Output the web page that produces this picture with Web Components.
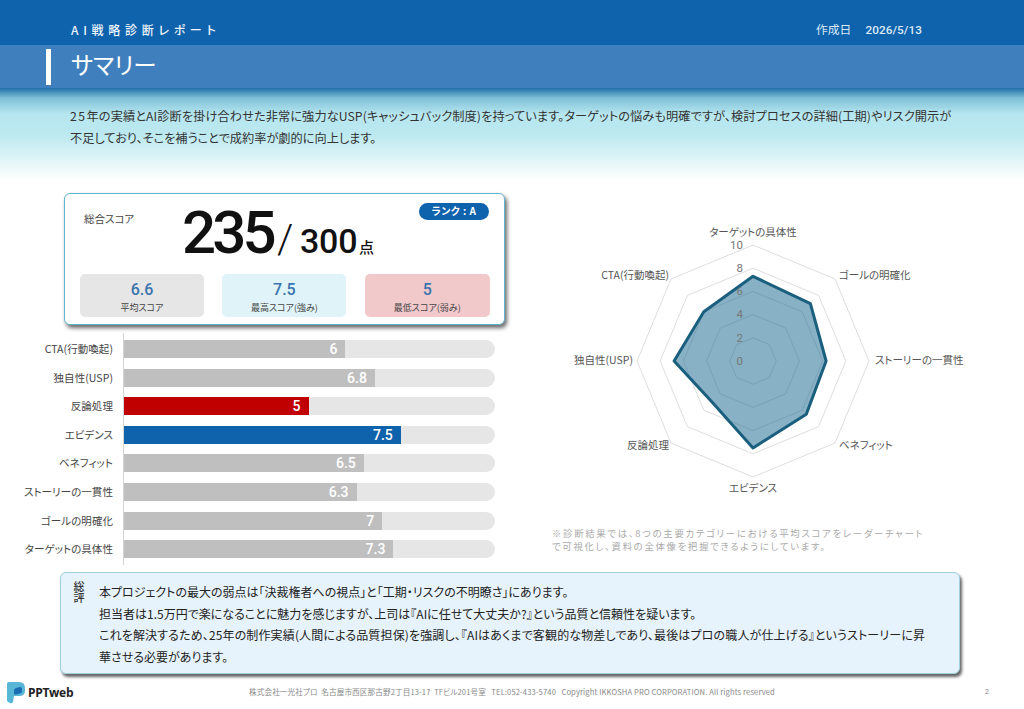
<!DOCTYPE html>
<html lang="ja"><head><meta charset="utf-8"><title>サマリー</title>
<style>
html,body{margin:0;padding:0;background:#fff}
body{width:1024px;height:709px;overflow:hidden;font-family:"Noto Sans CJK JP","Noto Sans",sans-serif;color:#333;font-feature-settings:"palt"}
</style></head><body>
<report-page>
  <report-header slot="head" kicker="AI戦略診断レポート" date-label="作成日" date="2026/5/13" title="サマリー"></report-header>
  <summary-band slot="head"><span style="letter-spacing:.1px"><span style="letter-spacing:1.5px">25</span>年の実績とAI診断を掛け合わせた非常に強力なUSP(キャッシュバック制度)を持っています。ターゲットの悩みも明確ですが、検討プロセスの詳細(工期)やリスク開示が</span><br>不足しており、そこを補うことで成約率が劇的に向上します。</summary-band>
  <score-card slot="left">
    <stat-tile value="6.6" label="平均スコア" tone="grey"></stat-tile>
    <stat-tile value="7.5" label="最高スコア(強み)" tone="blue"></stat-tile>
    <stat-tile value="5" label="最低スコア(弱み)" tone="red"></stat-tile>
  </score-card>
  <bar-chart slot="left">
    <bar-row label="CTA(行動喚起)" value="6"></bar-row>
    <bar-row label="独自性(USP)" value="6.8"></bar-row>
    <bar-row label="反論処理" value="5" tone="low"></bar-row>
    <bar-row label="エビデンス" value="7.5" tone="high"></bar-row>
    <bar-row label="ベネフィット" value="6.5"></bar-row>
    <bar-row label="ストーリーの一貫性" value="6.3"></bar-row>
    <bar-row label="ゴールの明確化" value="7"></bar-row>
    <bar-row label="ターゲットの具体性" value="7.3"></bar-row>
  </bar-chart>
  <radar-chart slot="right">※診断結果では、8つの主要カテゴリーにおける平均スコアをレーダーチャート<br>で可視化し、資料の全体像を把握できるようにしています。</radar-chart>
  <verdict-box slot="verdict" label="総評">本プロジェクトの最大の弱点は「決裁権者への視点」と「工期・リスクの不明瞭さ」にあります。<br>担当者は1.5万円で楽になることに魅力を感じますが、上司は『AIに任せて大丈夫か?』という品質と信頼性を疑います。<br><span style="letter-spacing:.14px">これを解決するため、25年の制作実績(人間による品質担保)を強調し、『AIはあくまで客観的な物差しであり、最後はプロの職人が仕上げる』というストーリーに昇</span><br>華させる必要があります。</verdict-box>
  <page-footer slot="foot" page="2">株式会社一光社プロ&nbsp; 名古屋市西区那古野2丁目13-17&nbsp; TFビル201号室&nbsp;&nbsp; TEL:052-433-5740&nbsp;&nbsp; Copyright IKKOSHA PRO CORPORATION. All rights reserved</page-footer>
</report-page>
<script>
const FONT='"Noto Sans CJK JP","Noto Sans",sans-serif';
const NUM='Roboto,"Noto Sans CJK JP",sans-serif';
function def(name,html){
  customElements.define(name,class extends HTMLElement{
    connectedCallback(){
      if(this.shadowRoot)return;
      const r=this.attachShadow({mode:'open'});
      const get=k=>this.getAttribute(k)||'';
      r.innerHTML=typeof html==='function'?html(get,this):html;
    }
  });
}
def('report-page',`<style>
:host{display:block;width:1024px;height:709px;overflow:hidden}
.main{display:grid;grid-template-columns:540px 1fr;height:379px;padding-top:13px;box-sizing:content-box}
.left{display:flex;flex-direction:column;gap:8px}
</style>
<slot name="head"></slot>
<div class="main"><div class="left"><slot name="left"></slot></div><div><slot name="right"></slot></div></div>
<slot name="verdict"></slot><slot name="foot"></slot>`);

def('report-header',g=>`<style>
:host{display:block;color:#fff}
.top{height:45px;background:#0f62ac;display:flex;justify-content:space-between;align-items:center;padding:15px 102px 0 71px;box-sizing:border-box}
.kicker{font-size:12px;font-weight:500;letter-spacing:4.7px;color:#eef5fb;line-height:1}
.date{display:flex;gap:14px;font-size:11.8px;color:#dbe9f6;line-height:1}
.date b{font:500 11.8px ${NUM};letter-spacing:.05px}
.band{height:43px;background:#3f7fbd;display:flex;align-items:center;padding-left:46px;box-sizing:border-box}
.bar{width:5px;height:36px;background:#fff;margin-right:20px}
h1{margin:0;font-size:23.5px;font-weight:400;line-height:1;position:relative;top:-2px}
</style>
<div class="top"><span class="kicker">${g('kicker')}</span><span class="date"><span>${g('date-label')}</span><b>${g('date')}</b></span></div>
<div class="band"><i class="bar"></i><h1>${g('title')}</h1></div>`);

def('summary-band',`<style>
:host{display:block;height:92px;box-sizing:border-box;padding:17px 0 0 70px;font-size:12.2px;line-height:22px;color:#333;white-space:nowrap;
background:linear-gradient(#1f6fa8 0,#7fc0d8 10px,#b6e6ef 26px,#bde9f0 48px,#fff 92px)}
</style><slot></slot>`);

def('score-card',`<style>
:host{display:block;width:441px;height:132px;margin-left:64px;box-sizing:border-box;background:#fff;border:1px solid #5fb4cf;border-radius:6px;box-shadow:2px 3px 4px #666;padding:0 15px}
.top{height:80px;position:relative;display:flex;align-items:flex-start}
.lab{font-size:10.5px;color:#444;margin:17px 0 0 4px;line-height:16px;width:98px}
.score{display:flex;align-items:baseline;color:#111;font-family:${NUM};line-height:1;margin-top:9px}
.big{font-size:60px;font-weight:500;letter-spacing:-3.9px;width:95px}
.sl{font-size:41px;font-weight:300;width:23px}
.of{font-size:34px;font-weight:500;letter-spacing:-.2px;width:59px}
.pt{font-size:15px;font-family:${FONT};font-weight:500}
.rank{position:absolute;right:0;top:9px;width:70px;height:17px;border-radius:9px;background:#0f62ac;color:#fff;font-size:10px;font-weight:700;text-align:center;line-height:16px;letter-spacing:.5px}
.tiles{display:grid;grid-template-columns:124px 124px 125px;column-gap:18.4px}
</style>
<div class="top"><span class="lab">総合スコア</span>
<div class="score"><span class="big">235</span><span class="sl">/</span><span class="of">300</span><span class="pt">点</span></div>
<span class="rank">ランク : A</span></div>
<div class="tiles"><slot></slot></div>`);

def('stat-tile',g=>{const c={grey:'#e6e6e6',blue:'#dff3f9',red:'#f2c9cb'}[g('tone')];return `<style>
:host{display:flex;flex-direction:column;align-items:center;height:43px;border-radius:5px;background:${c}}
b{font:500 16px/18px ${NUM};color:#3a74ae;margin-top:7px}
span{font-size:9px;line-height:13px;color:#444;margin-top:2px}
</style><b>${g('value')}</b><span>${g('label')}</span>`});

def('bar-chart',`<style>
:host{display:block;position:relative;height:232px;box-sizing:border-box;padding-top:7px}
.wrap{display:flex;flex-direction:column;gap:10.6px}
.axis{position:absolute;left:123px;top:0;bottom:0;width:1px;background:#d4d4d4}
</style><i class="axis"></i><div class="wrap"><slot></slot></div>`);

def('bar-row',g=>{const v=parseFloat(g('value'));const c={low:'#c00000',high:'#0f62ac'}[g('tone')]||'#bfbfbf';return `<style>
:host{display:grid;grid-template-columns:113px 371px;column-gap:11px;align-items:center;height:18px}
.l{font-size:10.5px;color:#444;text-align:right;white-space:nowrap;line-height:18px;letter-spacing:.06px}
.t{height:18px;background:#e6e6e6;border-radius:0 9px 9px 0}
.f{height:18px;width:${(v*36.9).toFixed(1)}px;background:${c};color:#fff;font:500 14px/18px ${NUM};text-align:right;padding-right:8px;box-sizing:border-box}
</style><span class="l">${g('label')}</span><div class="t"><div class="f">${g('value')}</div></div>`});

def('radar-chart',()=>{
  const cx=213,cy=146,u=11.6;
  const pt=(i,v)=>{const a=-Math.PI/2+i*Math.PI/4;return (cx+Math.cos(a)*v*u).toFixed(1)+','+(cy+Math.sin(a)*v*u).toFixed(1)};
  const poly=(vs)=>vs.map((v,i)=>pt(i,v)).join(' ');
  const rings=[2,4,6,8,10].map(v=>`<polygon points="${poly(Array(8).fill(v))}" fill="none" stroke="#dedede" stroke-width="1"/>`).join('');
  const data=[7.3,7,6.3,6.5,7.5,5,6.8,6];
  const ticks=[0,2,4,6,8,10].map(v=>`<text x="203" y="${cy-v*u+3.8}" text-anchor="end" font-family='Roboto,sans-serif' font-size="11.5" fill="#777">${v}</text>`).join('');
  const L=(x,y,a,t)=>`<text x="${x-540}" y="${y-215+4}" text-anchor="${a}" font-size="10.5" fill="#555">${t}</text>`;
  return `<style>
:host{display:block;margin-top:22px}
svg{display:block;font-family:${FONT}}
p{margin:22px 0 0 12px;font-size:9.4px;line-height:13px;letter-spacing:1.7px;color:#aaa;white-space:nowrap}
</style>
<svg width="440" height="290" viewBox="0 0 440 290">${rings}
<polygon points="${poly(data)}" fill="#1a6a90" fill-opacity=".52" stroke="#1b5f7f" stroke-width="3" stroke-linejoin="round"/>
${ticks}
${L(753,232,'middle','ターゲットの具体性')}${L(839,275,'start','ゴールの明確化')}${L(875,360,'start','ストーリーの一貫性')}${L(839,445,'start','ベネフィット')}${L(753,488,'middle','エビデンス')}${L(669,445,'end','反論処理')}${L(633,360,'end','独自性(USP)')}${L(669,275,'end','CTA(行動喚起)')}
</svg><p><slot></slot></p>`});

def('verdict-box',g=>`<style>
:host{display:flex;width:900px;height:102px;margin-left:60px;box-sizing:border-box;background:#e7f3fc;border:1px solid #9fd0e0;border-radius:6px;box-shadow:2px 3px 3px #666;padding:8px 20px 0 12px}
.lab{writing-mode:vertical-rl;font-size:11px;font-weight:500;line-height:11px;width:11px;color:#333;margin-right:15px;height:22px}
.txt{font-size:12px;line-height:21.6px;color:#222;white-space:nowrap}
</style><span class="lab">${g('label')}</span><div class="txt"><slot></slot></div>`);

def('page-footer',g=>`<style>
:host{display:grid;grid-template-columns:249px 1fr auto;align-items:center;height:35px;padding-right:35px;box-sizing:border-box}
.logo{display:flex;align-items:center;gap:3px;padding-left:7px;margin-top:2px}
.brand{font:700 12px/1 "Open Sans",sans-serif;color:#222;letter-spacing:-.3px}
.t{font-size:7.6px;color:#888;white-space:nowrap;line-height:1;letter-spacing:.12px}
.n{font-size:7px;color:#888;font-family:${NUM}}
</style>
<div class="logo"><svg width="18" height="23" viewBox="0 0 18 23"><path d="M0 3Q0 1 2 1H12Q18 1 18 7V10Q18 15 12 15H7L6 21Q5 23 3 22L1 21Q0 20.5 0 19Z" fill="#58b7d6"/><path d="M7 9.5Q7 7.5 9 7L13 6Q15 6 15 8V10Q15 12 13 12.5L9 13.5Q7 14 7 12Z" fill="#1a6db0"/></svg><span class="brand">PPTweb</span></div>
<span class="t"><slot></slot></span><span class="n">${g('page')}</span>`);
</script></body></html>
